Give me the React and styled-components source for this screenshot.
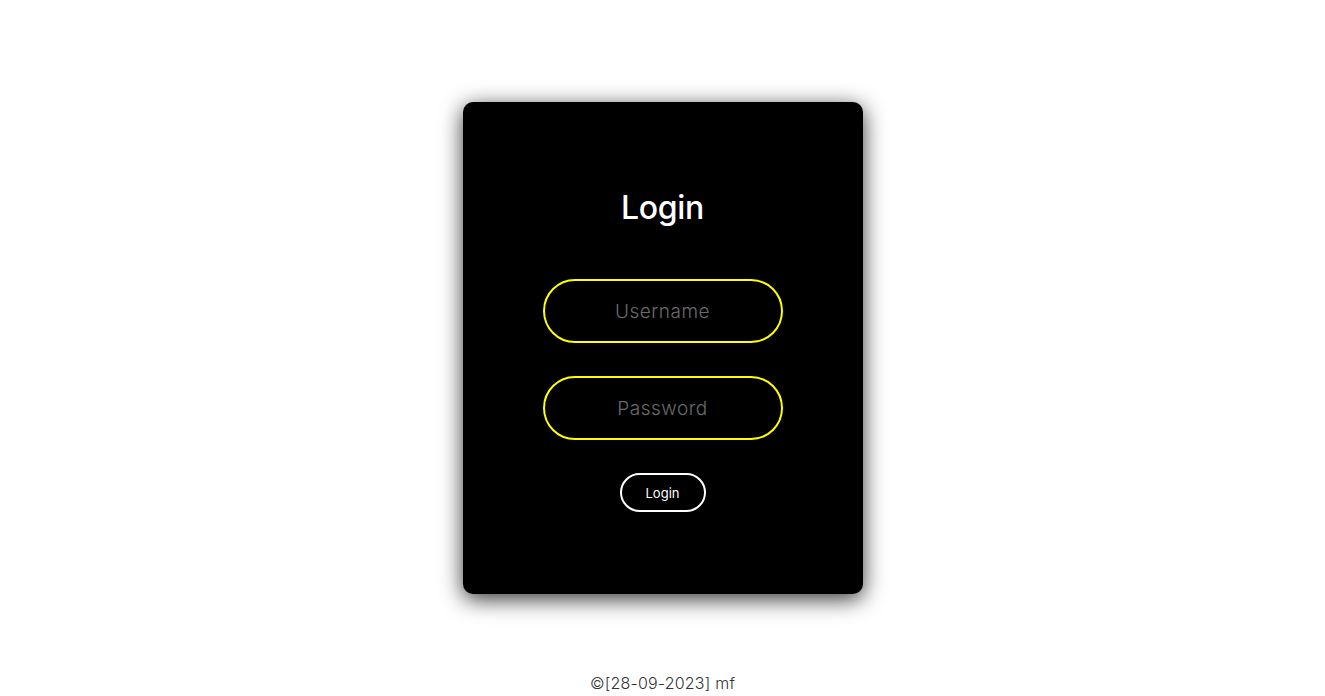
import React from "react";
import styled, { createGlobalStyle } from "styled-components";

const Global = createGlobalStyle`
  html, body { margin: 0; padding: 0; background: #fff; }
  body { font-family: "Inter", "Noto Sans", sans-serif; }
  * { box-sizing: border-box; }
`;

const Page = styled.div`
  display: flex;
  flex-direction: column;
  align-items: center;
  padding-top: 102px;
`;

const Card = styled.form`
  width: 400px;
  height: 492px;
  background: #000;
  border-radius: 10px;
  box-shadow: 0 5px 22px rgba(0, 0, 0, 0.8);
  display: flex;
  flex-direction: column;
  align-items: center;
  padding-top: 84px;
`;

const Title = styled.h1`
  margin: 0;
  color: #fff;
  font-family: "Inter", sans-serif;
  font-weight: 500;
  font-size: 32px;
  line-height: 44px;
  letter-spacing: -0.3px;
`;

const Field = styled.input`
  width: 240px;
  height: 64px;
  margin-top: ${(p) => p.$top}px;
  background: transparent;
  border: 2px solid #ffff00;
  border-radius: 32px;
  outline: none;
  text-align: center;
  color: #fff;
  font-family: "Inter", sans-serif;
  font-weight: 300;
  font-size: 19px;
  letter-spacing: 0.5px;
  &::placeholder { color: #6b6b6b; opacity: 1; }
`;

const Button = styled.button`
  margin-top: 33px;
  width: 86px;
  height: 39px;
  background: transparent;
  border: 2px solid #fff;
  border-radius: 20px;
  color: #fff;
  font-family: "Inter", sans-serif;
  font-weight: 400;
  font-size: 13px;
  cursor: pointer;
`;

const Footer = styled.footer`
  margin-top: 77px;
  color: #333;
  font-family: "Inter", sans-serif;
  font-weight: 300;
  font-size: 16px;
  letter-spacing: 0.2px;
  line-height: 24px;
`;

export default function App() {
  return (
    <>
      <Global />
      <Page>
        <Card onSubmit={(e) => e.preventDefault()}>
          <Title>Login</Title>
          <Field $top={49} type="text" placeholder="Username" />
          <Field $top={33} type="password" placeholder="Password" />
          <Button type="submit">Login</Button>
        </Card>
        <Footer>©[28-09-2023] mf</Footer>
      </Page>
    </>
  );
}
